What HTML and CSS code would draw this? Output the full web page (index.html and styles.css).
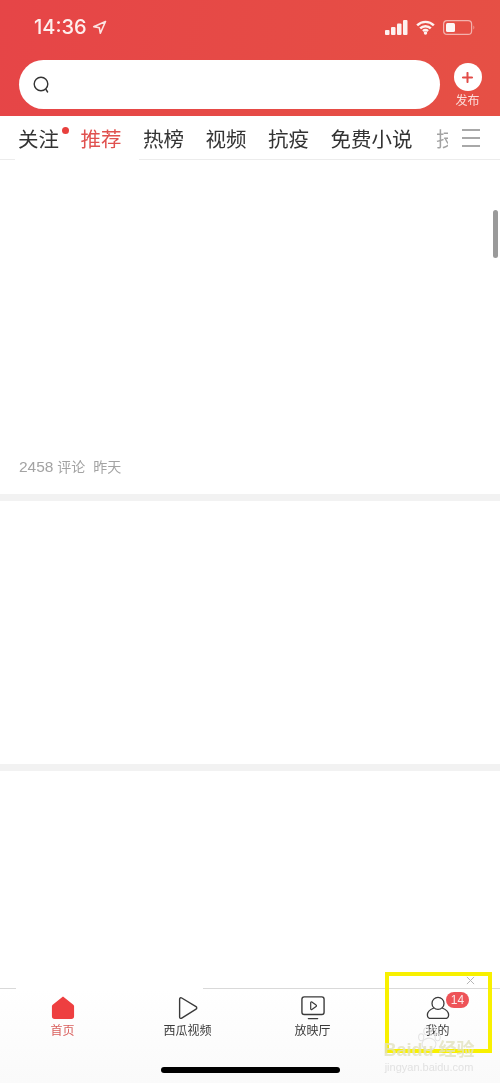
FILE: index.html
```html
<!DOCTYPE html>
<html lang="zh">
<head>
<meta charset="utf-8">
<title>首页</title>
<link rel="stylesheet" href="styles.css">
</head>
<body>
<div class="app">
  <header class="top">
    <div class="status">
      <div class="clock"><span>14:36</span>
        <svg class="loc" viewBox="0 0 14 14"><path d="M12.600 1.400 1.600 6.200l5.200 1 1 5.200z" fill="none" stroke="#fbe4e2" stroke-width="1.500" stroke-linejoin="round"/></svg>
      </div>
      <div class="sys">
        <svg class="signal" viewBox="0 0 23 15"><rect x="0" y="10" width="4.500" height="5" rx="1"/><rect x="6" y="7" width="4.500" height="8" rx="1"/><rect x="12" y="3.500" width="4.500" height="11.500" rx="1"/><rect x="18" y="0" width="4.500" height="15" rx="1"/></svg>
        <svg class="wifi" viewBox="0 0 20 15"><path d="M1.200 5.200a12.500 12.500 0 0 1 17.600 0M4.400 8.400a7.900 7.900 0 0 1 11.200 0M7.400 11.200a3.700 3.700 0 0 1 5.200 0" fill="none" stroke="#fdf1f0" stroke-width="2.600"/><circle cx="10" cy="13.200" r="1.800" fill="#fdf1f0"/></svg>
        <svg class="batt" viewBox="0 0 32 15"><rect x=".6" y=".6" width="28" height="13.800" rx="3.500" fill="none" stroke="#f3b1ac" stroke-width="1.200"/><rect x="3" y="3" width="9" height="9" rx="1.500" fill="#fdf6f5"/><path d="M30.500 5.500c1 .5 1 3.500 0 4z" fill="#f3b1ac"/></svg>
      </div>
    </div>
    <div class="searchrow">
      <div class="search">
        <svg class="glass" viewBox="0 0 18 18"><circle cx="8" cy="8" r="6.800" fill="none" stroke="#333" stroke-width="1.400"/><path d="m13 13.500 1.600 2.500" stroke="#333" stroke-width="1.400" stroke-linecap="round"/></svg>
      </div>
      <div class="publish">
        <div class="plus"><svg viewBox="0 0 12 12"><path d="M6 1v10M1 6h10" stroke="#e24c48" stroke-width="2.200" stroke-linecap="round"/></svg></div>
        <span class="publabel">发布</span>
      </div>
    </div>
  </header>

  <nav class="tabs">
    <div class="tablist">
      <span class="tab follow">关注<i class="dot"></i></span>
      <span class="tab on">推荐</span>
      <span class="tab">热榜</span>
      <span class="tab">视频</span>
      <span class="tab">抗疫</span>
      <span class="tab">免费小说</span>
      <span class="tab cut">技</span>
    </div>
    <div class="menu"><i></i><i></i><i></i></div>
  </nav>

  <main class="feed">
    <section class="card first">
      <div class="scroll"></div>
      <p class="meta"><span class="num">2458</span> 评论&nbsp;&nbsp;昨天</p>
    </section>
    <section class="card second"></section>
    <section class="card third"></section>
  </main>

  <footer class="bar">
    <div class="item active">
      <svg class="ico" viewBox="0 0 26 26"><path d="M13 .5 24.200 9.500c.5.400.8 1 .8 1.700v10.800a3 3 0 0 1-3 3H4a3 3 0 0 1-3-3V11.200c0-.7.300-1.300.8-1.700z" fill="#ee3f40"/></svg>
      <span>首页</span>
    </div>
    <div class="item">
      <svg class="ico shift" viewBox="0 0 26 26"><path d="M5 3.500c0-1.300 1.200-2 2.300-1.300l15.500 9.400c1 .6 1 2 0 2.600L7.300 24c-1.100.7-2.300 0-2.300-1.300z" fill="none" stroke="#3a3a3a" stroke-width="1.500" stroke-linejoin="round"/></svg>
      <span>西瓜视频</span>
    </div>
    <div class="item">
      <svg class="ico" viewBox="0 0 26 26"><rect x="1" y="1" width="24" height="19" rx="2.500" fill="none" stroke="#3a3a3a" stroke-width="1.500"/><path d="M10.500 7.300c0-.8.700-1.200 1.300-.8l4.500 3.200c.6.400.6 1.200 0 1.600l-4.500 3.200c-.6.400-1.300 0-1.300-.8z" fill="none" stroke="#3a3a3a" stroke-width="1.300"/><path d="M8 24.500h10" stroke="#3a3a3a" stroke-width="1.500" stroke-linecap="round"/></svg>
      <span>放映厅</span>
    </div>
    <div class="item">
      <svg class="ico" viewBox="0 0 26 26"><circle cx="13" cy="8" r="6.500" fill="none" stroke="#3a3a3a" stroke-width="1.400"/><path d="M8.500 13C4.500 14.500 1.500 17 1.500 20.500c0 2.300 1.500 3.800 4 3.800h15c2.500 0 4-1.500 4-3.800 0-3.500-3-6-7-7.500" fill="none" stroke="#3a3a3a" stroke-width="1.400"/></svg>
      <span>我的</span>
      <b class="badge">14</b>
    </div>
  </footer>

  <div class="homebar"></div>
  <div class="highlight"></div>
  <svg class="close" viewBox="0 0 10 10"><path d="m1 1 8 8M9 1 1 9" stroke="#b5b5b5" stroke-width="1.100"/></svg>
  <svg class="paw" viewBox="0 0 30 30"><g fill="none" stroke="#e4e4e4" stroke-width="1.200"><ellipse cx="15" cy="21" rx="8" ry="7"/><ellipse cx="6" cy="13" rx="3" ry="4"/><ellipse cx="12" cy="6" rx="3" ry="4"/><ellipse cx="20" cy="6" rx="3" ry="4"/><ellipse cx="25" cy="13" rx="3" ry="4"/></g></svg>
  <div class="mark"><span class="brand">Baidu 经验</span><span class="url">jingyan.baidu.com</span></div>
</div>
</body>
</html>
```

FILE: styles.css
```css
* { box-sizing: border-box; }
html, body { margin: 0; padding: 0; }
body { background: #fff; font-family: "Noto Sans CJK SC", "Liberation Sans", sans-serif; }
.app { position: relative; width: 500px; height: 1083px; overflow: hidden; display: flex; flex-direction: column; background: #fff; filter: blur(.35px); }

.top { height: 116px; background: linear-gradient(100deg, #e64547, #e65045); display: flex; flex-direction: column; }
.status { height: 60px; padding: 16px 25px 0 34px; display: flex; justify-content: space-between; align-items: flex-start; }
.clock { display: flex; align-items: center; gap: 5px; color: #fdeeed; font-family: Inter, "Liberation Sans", sans-serif; font-size: 20px; font-weight: 500; line-height: 22px; }
.loc { width: 15px; height: 15px; }
.sys { display: flex; align-items: center; gap: 8px; padding-top: 4px; }
.signal { width: 23px; height: 15px; fill: #fdf1f0; }
.wifi { width: 19px; height: 15px; }
.batt { width: 32px; height: 15px; }
.searchrow { display: flex; padding-left: 19px; align-items: flex-start; }
.search { width: 421px; height: 49px; background: #fff; border-radius: 25px; display: flex; align-items: center; padding-left: 14px; }
.glass { width: 18px; height: 18px; }
.publish { width: 55px; display: flex; flex-direction: column; align-items: center; padding-top: 3px; }
.plus { width: 28px; height: 28px; border-radius: 50%; background: #fff; display: flex; align-items: center; justify-content: center; }
.plus svg { width: 11px; height: 11px; }
.publabel { font-size: 12px; line-height: 16px; color: #fbdcd9; margin-top: 1px; }

.tabs { height: 44px; display: flex; align-items: center; background: linear-gradient(90deg, #ececec 15px, #fff 15px, #fff 139px, #ececec 139px) left bottom / 100% 1px no-repeat; }
.tablist { display: flex; flex: none; width: 448px; padding-left: 18px; }
.tab { font-size: 20.500px; line-height: 28px; color: #333; margin-right: 21.500px; white-space: nowrap; position: relative; }
.tab.on { color: #e0514f; }
.tab.cut { opacity: .45; margin: 0 0 0 2px; }
.dot { position: absolute; left: 44px; top: 3px; width: 7px; height: 7px; border-radius: 50%; background: #e8403d; }
.menu { position: relative; display: flex; flex-direction: column; gap: 6px; width: 52px; height: 40px; justify-content: center; padding: 0 20px 0 14px; background: #fff; }
.menu i { display: block; height: 2px; background: #a8a8a8; }

.feed { flex: 1; display: flex; flex-direction: column; }
.card { position: relative; border-bottom: 7px solid #f2f2f2; }
.first { height: 341px; }
.second { height: 270px; }
.third { flex: 1; border-bottom: 0; }
.scroll { position: absolute; right: 2px; top: 50px; width: 5px; height: 48px; border-radius: 3px; background: #9a9a9a; }
.meta { position: absolute; left: 19px; bottom: 17px; margin: 0; font-family: "Liberation Sans", "Noto Sans CJK SC", sans-serif; font-size: 14px; line-height: 20px; color: #a3a3a3; white-space: nowrap; }
.num { font-size: 15.500px; }

.bar { height: 95px; background: linear-gradient(90deg, #d9d9d9 16px, #fff 16px, #fff 203px, #d9d9d9 203px) left top / 100% 1px no-repeat, linear-gradient(#fff, #fafafa); padding-top: 1px; display: grid; grid-template-columns: repeat(4, 125px); }
.item { position: relative; display: flex; flex-direction: column; align-items: center; padding-top: 7px; font-size: 12px; line-height: 16px; color: #3a3a3a; }
.item.active { color: #d9605e; }
.ico { width: 24px; height: 24px; margin-bottom: 2px; }
.ico.shift { margin-left: -2px; }
.badge { position: absolute; left: 71px; top: 3px; width: 23px; height: 16px; border-radius: 8px; background: #ee5358; color: #fbe8e8; font-family: "Liberation Sans", sans-serif; font-size: 12px; font-weight: 400; line-height: 16px; text-align: center; }

.homebar { position: absolute; left: 161px; top: 1067px; width: 179px; height: 6px; border-radius: 3px; background: #000; }
.highlight { position: absolute; left: 385px; top: 972px; width: 107px; height: 81px; border: 4px solid #f8f000; }
.close { position: absolute; left: 466px; top: 976px; width: 9px; height: 9px; }
.paw { position: absolute; left: 416px; top: 1026px; width: 26px; height: 26px; }
.mark { position: absolute; left: 374px; top: 1041px; width: 110px; display: flex; flex-direction: column; align-items: center; }
.brand { font-family: "Liberation Sans", "Noto Sans CJK SC", sans-serif; font-size: 18px; line-height: 18px; font-weight: 700; color: rgba(225, 225, 190, .8); white-space: nowrap; }
.url { font-family: "Liberation Sans", sans-serif; font-size: 11px; line-height: 14px; margin-top: 1px; color: #e2e2e2; white-space: nowrap; }
```
